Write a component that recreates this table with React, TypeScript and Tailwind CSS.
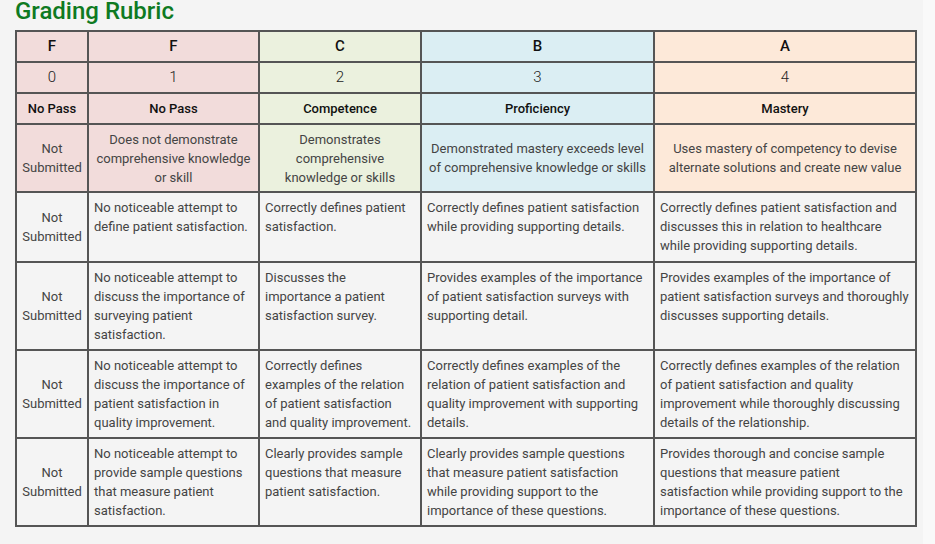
const levels = [
  { grade: "F", points: "0", label: "No Pass", desc: "Not Submitted", bg: "bg-[#f2dcdb]" },
  { grade: "F", points: "1", label: "No Pass", desc: "Does not demonstrate comprehensive knowledge or skill", bg: "bg-[#f2dcdb]" },
  { grade: "C", points: "2", label: "Competence", desc: "Demonstrates comprehensive knowledge or skills", bg: "bg-[#ebf1de]" },
  { grade: "B", points: "3", label: "Proficiency", desc: "Demonstrated mastery exceeds level of comprehensive knowledge or skills", bg: "bg-[#dbeef3]" },
  { grade: "A", points: "4", label: "Mastery", desc: "Uses mastery of competency to devise alternate solutions and create new value", bg: "bg-[#fde9d9]" },
];

const criteria = [
  {
    h: "h-[70px]",
    cells: [
      "No noticeable attempt to define patient satisfaction.",
      "Correctly defines patient satisfaction.",
      "Correctly defines patient satisfaction while providing supporting details.",
      "Correctly defines patient satisfaction and discusses this in relation to healthcare while providing supporting details.",
    ],
  },
  {
    h: "h-[88px]",
    cells: [
      "No noticeable attempt to discuss the importance of surveying patient satisfaction.",
      "Discusses the importance a patient satisfaction survey.",
      "Provides examples of the importance of patient satisfaction surveys with supporting detail.",
      "Provides examples of the importance of patient satisfaction surveys and thoroughly discusses supporting details.",
    ],
  },
  {
    h: "h-[88px]",
    cells: [
      "No noticeable attempt to discuss the importance of patient satisfaction in quality improvement.",
      "Correctly defines examples of the relation of patient satisfaction and quality improvement.",
      "Correctly defines examples of the relation of patient satisfaction and quality improvement with supporting details.",
      "Correctly defines examples of the relation of patient satisfaction and quality improvement while thoroughly discussing details of the relationship.",
    ],
  },
  {
    h: "h-[88px]",
    cells: [
      "No noticeable attempt to provide sample questions that measure patient satisfaction.",
      "Clearly provides sample questions that measure patient satisfaction.",
      "Clearly provides sample questions that measure patient satisfaction while providing support to the importance of these questions.",
      "Provides thorough and concise sample questions that measure patient satisfaction while providing support to the importance of these questions.",
    ],
  },
];

const cell = "border-2 border-[#555]";

export default function App() {
  return (
    <div className="flex min-h-screen w-[935px] h-[544px] bg-[#f4f4f4] font-['Roboto',sans-serif]">
      <div className="flex-1 pl-[15px]">
        <h2 className="text-[24px] leading-[22px] font-medium text-[#0e7a22]">Grading Rubric</h2>

        <table className="mt-[8px] w-[900px] table-fixed border-collapse">
          <colgroup>
            <col className="w-[72px]" />
            <col className="w-[171px]" />
            <col className="w-[162px]" />
            <col className="w-[233px]" />
            <col className="w-[262px]" />
          </colgroup>
          <thead>
            <tr className="h-[31px]">
              {levels.map((l, i) => (
                <th key={i} className={`${cell} ${l.bg} text-[15px] font-medium text-[#111] p-0`}>
                  {l.grade}
                </th>
              ))}
            </tr>
            <tr className="h-[31px]">
              {levels.map((l, i) => (
                <td key={i} className={`${cell} ${l.bg} text-center text-[15px] font-light text-[#222] p-0`}>
                  {l.points}
                </td>
              ))}
            </tr>
            <tr className="h-[31px]">
              {levels.map((l, i) => (
                <th key={i} className={`${cell} ${l.bg} text-[13px] font-medium text-[#111] p-0`}>
                  {l.label}
                </th>
              ))}
            </tr>
            <tr className="h-[68px]">
              {levels.map((l, i) => (
                <td
                  key={i}
                  className={`${cell} ${l.bg} text-center align-middle text-[13px] leading-[19px] text-[#444] px-[5px] py-0`}
                >
                  {l.desc}
                </td>
              ))}
            </tr>
          </thead>
          <tbody>
            {criteria.map((row, r) => (
              <tr key={r} className={row.h}>
                <td className={`${cell} text-center align-middle text-[13px] leading-[19px] text-[#444] px-[3px] py-0`}>
                  Not Submitted
                </td>
                {row.cells.map((text, c) => (
                  <td key={c} className={`${cell} align-top text-[13px] leading-[19px] text-[#444] px-[5px] pt-[5px] pb-0`}>
                    {text}
                  </td>
                ))}
              </tr>
            ))}
          </tbody>
        </table>
      </div>
      <div className="w-[12px] bg-[#f9f9f9]" />
    </div>
  );
}
